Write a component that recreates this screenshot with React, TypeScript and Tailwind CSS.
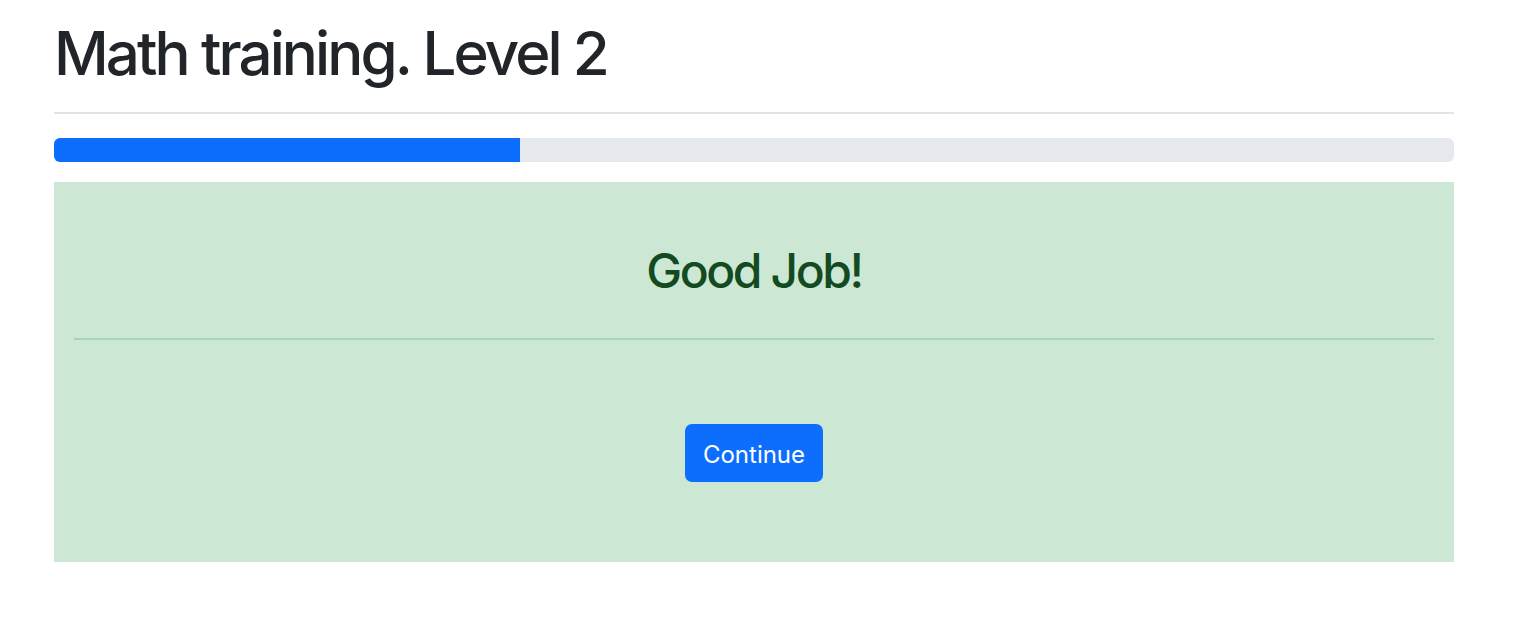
import React from "react";

export default function App() {
  return (
    <div className="min-h-[630px] bg-white px-[54px] pt-[17px]" style={{ fontFamily: "Inter, 'Noto Sans', sans-serif" }}>
      <div className="w-[1400px]">
        <h1 className="text-[60px] leading-[72px] font-medium tracking-[-2.9px] text-[#212529]">Math training. Level 2</h1>
        <div className="mt-[23px] h-[2px] bg-[#e4e4e4]" />
        <div className="mt-[24px] h-[24px] rounded-[6px] bg-[#e5e8ec] overflow-hidden flex">
          <div className="h-full w-[466px] bg-[#0d6efd]" />
        </div>
        <div className="mt-[20px] bg-[#cce8d4] px-[20px] pt-[60px] pb-[80px]">
          <h2 className="text-center text-[48px] leading-[57.6px] font-medium tracking-[-2.4px] text-[#144a22]">Good Job!</h2>
          <div className="mt-[38px] h-[2px] bg-[#a5d5b3]" />
          <div className="mt-[84px] flex justify-center">
            <button className="h-[58px] px-[18px] pt-[4px] rounded-[7px] bg-[#0d6efd] text-white text-[24px] leading-[36px]">Continue</button>
          </div>
        </div>
      </div>
    </div>
  );
}
